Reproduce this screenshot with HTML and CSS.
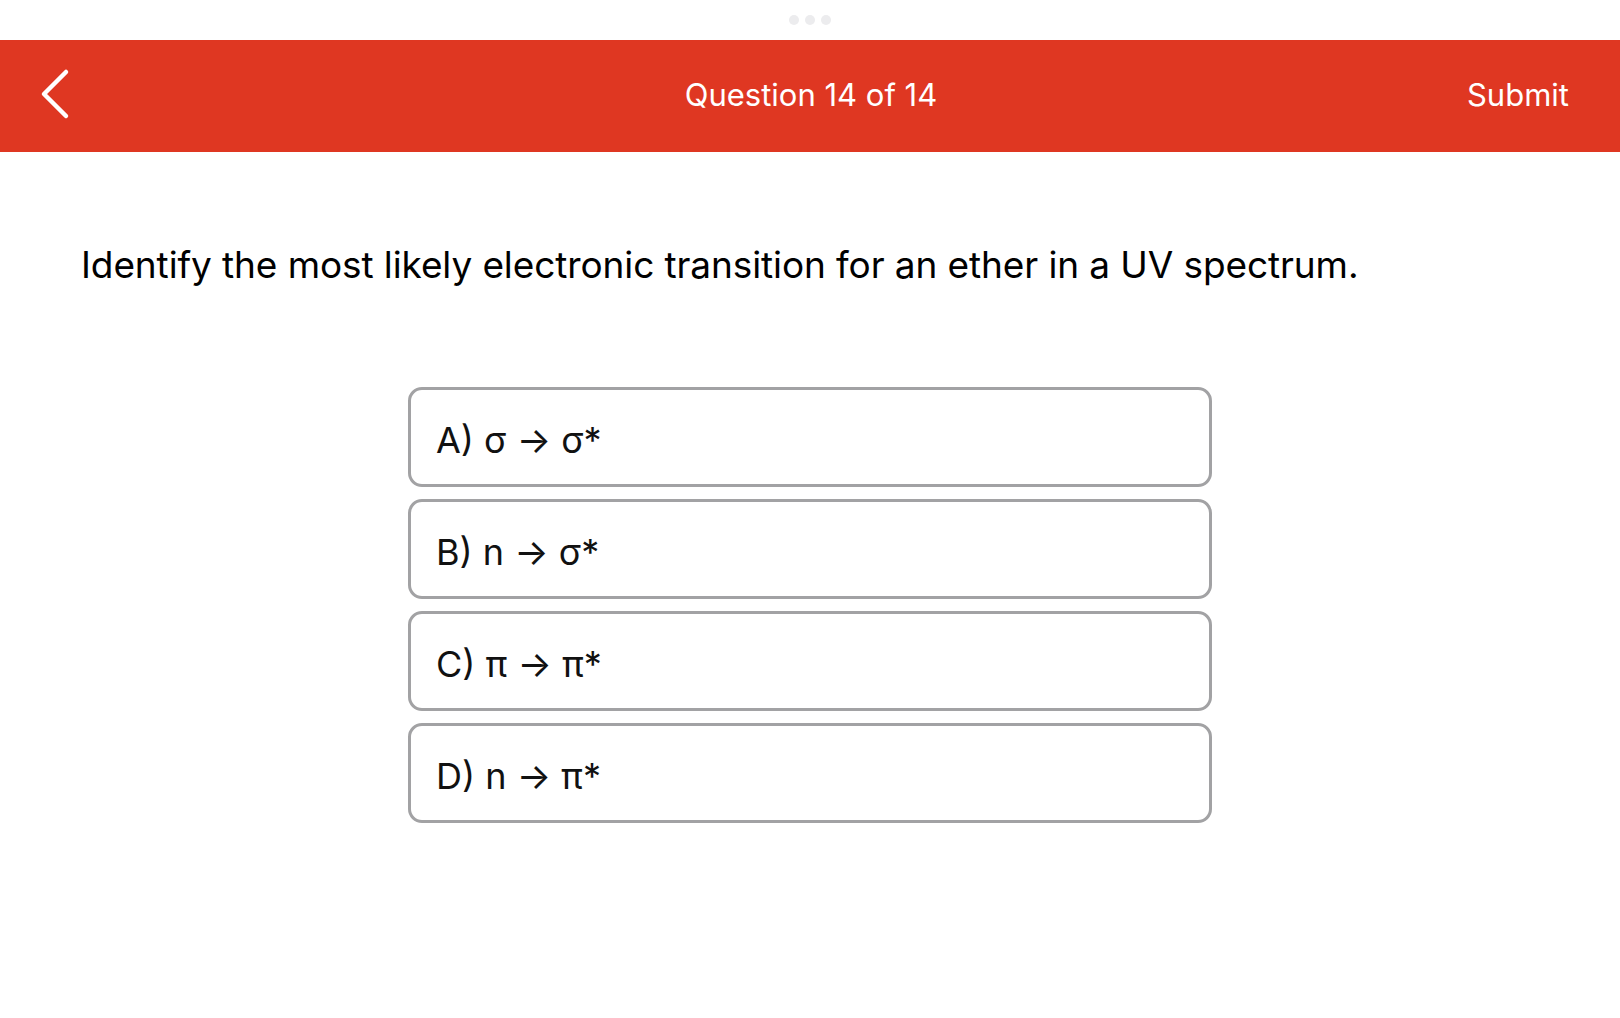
FILE: index.html
```html
<!DOCTYPE html>
<html lang="en">
<head>
  <meta charset="UTF-8">
  <meta name="viewport" content="width=device-width, initial-scale=1.0">
  <title>Question 14 of 14</title>
  <link rel="stylesheet" href="styles.css">
</head>
<body>
  <div class="status">
    <span class="dot"></span>
    <span class="dot"></span>
    <span class="dot"></span>
  </div>
  <div class="bar">
    <div class="back">
      <svg width="34" height="52" viewBox="0 0 34 52">
        <path d="M28 4 L6 26 L28 48" fill="none" stroke="#fff" stroke-width="4.5" stroke-linecap="round" stroke-linejoin="round"/>
      </svg>
    </div>
    <div class="title">Question 14 of 14</div>
    <div class="submit">Submit</div>
  </div>
  <div class="content">
    <p class="question">Identify the most likely electronic transition for an ether in a UV spectrum.</p>
    <div class="options">
      <div class="option">A) σ → σ*</div>
      <div class="option">B) n → σ*</div>
      <div class="option">C) π → π*</div>
      <div class="option">D) n → π*</div>
    </div>
  </div>
</body>
</html>
```

FILE: styles.css
```css
* {
  margin: 0;
  padding: 0;
  box-sizing: border-box;
}
:root {
  --red: #df3722;
  --line: #a2a2a4;
}
body {
  font-family: Inter, "Liberation Sans", sans-serif;
  background: #fff;
  color: #000;
}
/* 顶部三个小点 */
.status {
  height: 40px;
  display: flex;
  justify-content: center;
  align-items: center;
  gap: 6px;
}
.dot {
  width: 10px;
  height: 10px;
  border-radius: 50%;
  background: #ececee;
}
/* 红色标题栏 */
.bar {
  height: 112px;
  background: var(--red);
  color: #fff;
  display: grid;
  grid-template-columns: 200px 1fr 200px;
  align-items: center;
  padding: 0 51px 4px 38px;
}
.back {
  display: flex;
  align-items: center;
}
.title {
  text-align: center;
  font-size: 31px;
  padding-left: 15px;
}
.submit {
  text-align: right;
  font-size: 31px;
}
/* 题目与选项 */
.content {
  padding: 90px 0 0 81px;
}
.question {
  font-size: 37px;
  letter-spacing: -0.1px;
}
.options {
  width: 804px;
  margin: 100px 0 0 327px;
  display: flex;
  flex-direction: column;
  gap: 12px;
}
.option {
  height: 100px;
  border: 3.5px solid var(--line);
  border-radius: 14px;
  display: flex;
  align-items: center;
  padding: 5px 0 0 25px;
  font-size: 36px;
  color: #111;
}
```
